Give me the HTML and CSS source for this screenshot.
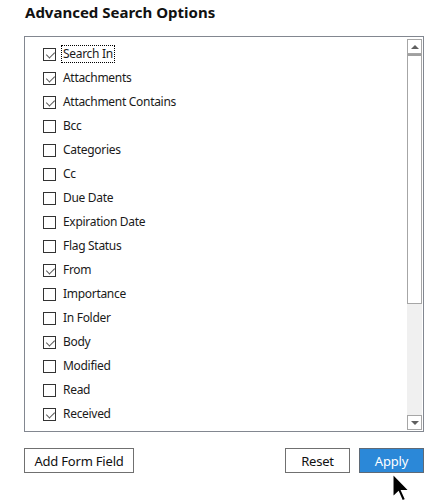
FILE: index.html
```html
<!DOCTYPE html>
<html>
<head>
<meta charset="utf-8">
<link rel="stylesheet" href="styles.css">
</head>
<body>
<div class="page">
  <h1 class="title">Advanced Search Options</h1>
  <div class="listbox">
    <ul class="items">
      <li class="item checked"><span class="cb"></span><span class="label focus">Search In</span></li>
      <li class="item checked"><span class="cb"></span><span class="label">Attachments</span></li>
      <li class="item checked"><span class="cb"></span><span class="label">Attachment Contains</span></li>
      <li class="item"><span class="cb"></span><span class="label">Bcc</span></li>
      <li class="item"><span class="cb"></span><span class="label">Categories</span></li>
      <li class="item"><span class="cb"></span><span class="label">Cc</span></li>
      <li class="item"><span class="cb"></span><span class="label">Due Date</span></li>
      <li class="item"><span class="cb"></span><span class="label">Expiration Date</span></li>
      <li class="item"><span class="cb"></span><span class="label">Flag Status</span></li>
      <li class="item checked"><span class="cb"></span><span class="label">From</span></li>
      <li class="item"><span class="cb"></span><span class="label">Importance</span></li>
      <li class="item"><span class="cb"></span><span class="label">In Folder</span></li>
      <li class="item checked"><span class="cb"></span><span class="label">Body</span></li>
      <li class="item"><span class="cb"></span><span class="label">Modified</span></li>
      <li class="item"><span class="cb"></span><span class="label">Read</span></li>
      <li class="item checked"><span class="cb"></span><span class="label">Received</span></li>
    </ul>
    <div class="scrollbar">
      <div class="sb-btn"><span class="arrow up"></span></div>
      <div class="sb-thumb"></div>
      <div class="sb-track"></div>
      <div class="sb-btn"><span class="arrow down"></span></div>
    </div>
  </div>
  <div class="actions">
    <button class="btn wide">Add Form Field</button>
    <div class="spacer"></div>
    <button class="btn">Reset</button>
    <button class="btn primary">Apply</button>
  </div>
  <svg class="cursor" width="19" height="29" viewBox="0 0 12.5 19" xmlns="http://www.w3.org/2000/svg">
    <path d="M0.5 0.5 L0.5 16 L4.2 12.5 L6.8 18.4 L9 17.4 L6.4 11.6 L11.4 11.6 Z" fill="#000" stroke="#fff" stroke-width="1" stroke-linejoin="miter"/>
  </svg>
</div>
</body>
</html>
```
FILE: styles.css
```css
* { box-sizing: border-box; }
html, body { margin: 0; padding: 0; background: #fff; }
body {
  font-family: "Noto Sans", "Open Sans", sans-serif;
  color: #1a1a1a;
}
.page {
  position: relative;
  width: 448px;
  height: 500px;
  overflow: hidden;
  padding: 0 24px;
}
.title {
  margin: 0;
  padding: 1px 0 0 1px;
  height: 36px;
  font-size: 15px;
  font-weight: bold;
  line-height: 22px;
  color: #111;
}
.listbox {
  display: flex;
  width: 400px;
  height: 396px;
  border: 1px solid #828790;
}
.items {
  flex: 1;
  list-style: none;
  margin: 0;
  padding: 5px 0 0 18px;
}
.item {
  display: flex;
  align-items: center;
  height: 24px;
  font-size: 12px;
  letter-spacing: -0.3px;
}
.cb {
  width: 13px;
  height: 13px;
  border: 1px solid #333;
  background: #fff;
  position: relative;
  flex: none;
}
.checked .cb::after {
  content: "";
  position: absolute;
  left: 2px;
  top: 0px;
  width: 7px;
  height: 4px;
  border-left: 1.4px solid #555;
  border-bottom: 1.4px solid #555;
  transform: translate(0.5px, 2.5px) rotate(-45deg);
}
.label {
  margin-left: 7px;
  line-height: 16px;
  padding: 0 1px;
  border: 1px solid transparent;
  position: relative;
  left: -2px;
}
.label.focus {
  border: 1px dotted #000;
  padding: 0 1px;
}
.scrollbar {
  width: 15px;
  margin: 2px 1px 1px 0;
  display: flex;
  flex-direction: column;
}
.sb-btn {
  height: 15px;
  border: 1px solid #a6a6a6;
  background: #fff;
  display: flex;
  align-items: center;
  justify-content: center;
}
.sb-thumb {
  height: 250px;
  border: 1px solid #a6a6a6;
  border-top: 2px solid #a0a0a0;
  background: #fff;
}
.sb-track {
  flex: 1;
  background: #f0f0f0;
}
.arrow {
  width: 0;
  height: 0;
  border-left: 4px solid transparent;
  border-right: 4px solid transparent;
}
.arrow.up { border-bottom: 4px solid #606060; }
.arrow.down { border-top: 4px solid #606060; }
.actions {
  display: flex;
  margin-top: 16px;
  width: 400px;
}
.spacer { flex: 1; }
.btn {
  font-family: "Noto Sans", "Open Sans", sans-serif;
  font-size: 13px;
  letter-spacing: -0.2px;
  color: #111;
  height: 25px;
  width: 65px;
  padding: 0;
  border: 1px solid #707070;
  background: #fff;
  line-height: 22px;
}
.btn.wide { width: 110px; }
.btn.primary {
  margin-left: 9px;
  background: #2b88d8;
  color: #fff;
  border-color: #5f6a76;
}
.cursor {
  position: absolute;
  left: 392px;
  top: 473px;
}
```
